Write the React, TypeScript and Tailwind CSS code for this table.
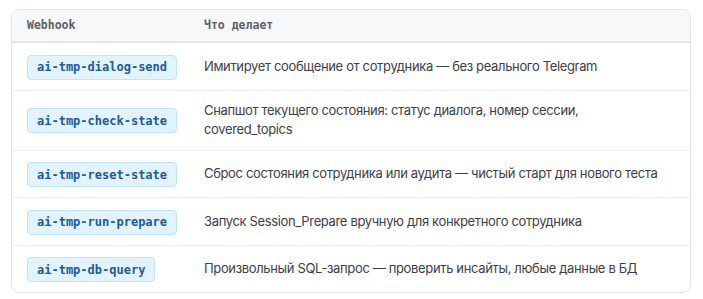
const rows: { hook: string; text: string }[] = [
  { hook: "ai-tmp-dialog-send", text: "Имитирует сообщение от сотрудника — без реального Telegram" },
  {
    hook: "ai-tmp-check-state",
    text: "Снапшот текущего состояния: статус диалога, номер сессии, covered_topics",
  },
  { hook: "ai-tmp-reset-state", text: "Сброс состояния сотрудника или аудита — чистый старт для нового теста" },
  { hook: "ai-tmp-run-prepare", text: "Запуск Session_Prepare вручную для конкретного сотрудника" },
  { hook: "ai-tmp-db-query", text: "Произвольный SQL-запрос — проверить инсайты, любые данные в БД" },
];

const mono = "font-['DejaVu_Sans_Mono','Liberation_Mono',monospace]";

export default function App() {
  return (
    <div className="min-h-[299px] bg-white pl-[11px] pt-[9px]">
      <div className="w-[680px] overflow-hidden rounded-lg border border-[#e3e5e8] bg-white font-['Inter',sans-serif]">
        <table className="w-full border-collapse text-left">
          <thead>
            <tr className="border-b-2 border-[#e3e5e8] bg-[#f7f8f9]">
              <th className={`h-[32px] w-[177px] pl-[15px] text-[11.5px] font-bold text-[#5b6068] ${mono}`}>
                Webhook
              </th>
              <th className={`h-[32px] pl-[15px] text-[11.5px] font-bold text-[#5b6068] ${mono}`}>
                Что делает
              </th>
            </tr>
          </thead>
          <tbody>
            {rows.map((row, i) => (
              <tr key={row.hook} className={i < rows.length - 1 ? "border-b border-[#eceef0]" : ""}>
                <td className="py-[10px] pl-[15px] align-middle">
                  <span
                    className={`inline-flex h-[25px] items-center rounded-[4px] border border-[#bfe3f8] bg-[#e2f3fd] px-[9px] text-[12px] font-bold text-[#1c5a98] ${mono}`}
                  >
                    {row.hook}
                  </span>
                </td>
                <td className="py-[10px] pl-[15px] pr-[30px] align-middle text-[13px] leading-[19.5px] tracking-[-0.35px] text-[#3d4046]">
                  {row.text}
                </td>
              </tr>
            ))}
          </tbody>
        </table>
      </div>
    </div>
  );
}
